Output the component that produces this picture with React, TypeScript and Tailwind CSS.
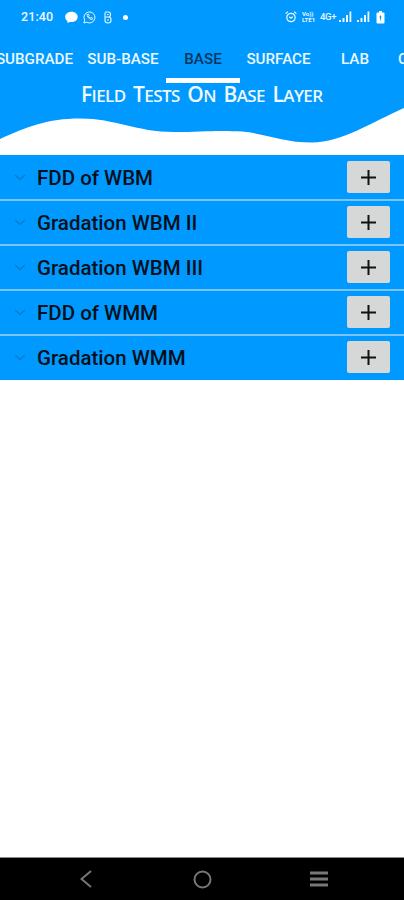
import clsx from 'clsx'

const tabs = [
	{ label: 'SUBGRADE', width: 'w-[95px]' },
	{ label: 'SUB-BASE', width: 'w-[82px]' },
	{ label: 'BASE', width: 'w-[74px] ml-[2px]', active: true },
	{ label: 'SURFACE', width: 'w-[77px]' },
	{ label: 'LAB', width: 'w-[76px]' },
	{ label: 'CBR', width: 'w-[39px]' },
]

const tests = ['FDD of WBM', 'Gradation WBM II', 'Gradation WBM III', 'FDD of WMM', 'Gradation WMM']

function Signal() {
	return (
		<svg width="13" height="12" viewBox="0 0 13 12" fill="currentColor">
			<path d="M0 9h2v2H0zM3.5 7h2v4H3.500zM7 4h2v7H7zM10.500 .5h1.800V11h-1.800z" />
		</svg>
	)
}

function StatusBar() {
	return (
		<div className="flex h-[34px] items-center pr-[19px] pl-[21px] text-[#edf8ff]">
			<span className="w-[44px] text-[12.5px] font-medium tracking-[0.1px]">21:40</span>
			<svg width="13" height="13" viewBox="0 0 13 13" fill="white">
				<path d="M6.5 .7C3 .7 .2 2.900 .2 5.900c0 1.800 1 3.300 2.500 4.200L2.200 12l2.700-1.100c3.900.7 7.800-1.500 7.800-5C12.700 2.900 10 .7 6.500 .7z" />
			</svg>
			<svg className="ml-[5px]" width="13" height="13" viewBox="0 0 13 13" fill="none" stroke="currentColor" strokeWidth="1">
				<path d="M.9 12l.8-2.800A5.500 5.500 0 1 1 3.700 11.200z" />
				<path d="M4.200 3.500c-.5 2 2.500 5.300 5 5l.4-1.300-1.500-.8-.8.7c-.8-.3-1.500-1-1.800-1.700l.6-.8-.6-1.500z" />
			</svg>
			<svg className="ml-[8px]" width="8" height="13" viewBox="0 0 8 13" fill="none" stroke="currentColor" strokeWidth="1.100">
				<path d="M1 1.500v8Q1 12 4 12t3-2.500V8.500Q7 6 4.500 6H1M1 1h3.500Q6.500 1 6.500 3.500T4.500 6" />
				<path d="M3 3.500h1.500M3 9h2" />
			</svg>
			<span className="ml-[11px] h-[5px] w-[5px] rounded-full bg-white" />
			<div className="ml-auto flex items-center">
				<svg width="12" height="12" viewBox="0 0 12 12" fill="none" stroke="currentColor" strokeWidth="1.200">
					<circle cx="6" cy="6.500" r="4.200" />
					<path d="M.6 2.600L2.800 .8M11.400 2.600L9.200 .8M4.200 5.800L6 7.300l1.800-1.500" />
				</svg>
				<div className="ml-[5px] w-[14px] text-[6px] leading-[6px] font-bold whitespace-pre-line">{'Vo))\nLTE1'}</div>
				<span className="ml-[4px] w-[19px] text-[9.5px] font-medium tracking-[-0.3px]">4G+</span>
				<Signal />
				<span className="w-[5px]" />
				<Signal />
				<svg className="ml-[6px]" width="9" height="13" viewBox="0 0 9 13">
					<path d="M3 0h3v1.500h1.500Q8.500 1.500 8.500 2.500v9q0 1-1 1h-6q-1 0-1-1v-9q0-1 1-1H3z" fill="white" />
					<path d="M4.500 4.500v4M3.500 6h2M4.500 8.500v1" stroke="#0099ff" strokeWidth="1" />
				</svg>
			</div>
		</div>
	)
}

function Tabs() {
	return (
		<nav className="-ml-[13px] flex h-[49px] w-[450px]">
			{tabs.map((tab) => (
				<button
					key={tab.label}
					className={clsx(
						'flex shrink-0 items-center justify-center border-b-[5px] pt-[6px] text-[15.2px] font-medium',
						tab.width,
						tab.active ? 'border-white text-[#07365c]' : 'border-transparent text-[#edf8ff]'
					)}>
					{tab.label}
				</button>
			))}
		</nav>
	)
}

function Title() {
	return (
		<h1 className="flex h-[25px] items-baseline gap-[7.5px] pl-[81px] font-['Open_Sans',sans-serif] text-[17px] leading-[22px] font-semibold tracking-[-0.6px] whitespace-nowrap text-[#edf8ff] uppercase">
			{['Field', 'Tests', 'On', 'Base', 'Layer'].map((word) => (
				<span key={word} className="block first-letter:text-[21px]">
					{word}
				</span>
			))}
		</h1>
	)
}

function TestRow({ name }: { name: string }) {
	return (
		<li className="flex h-[45px] items-center border-b-2 border-[#79c4f8] pr-[14px] pb-px pl-[14px] last:h-[44px] last:border-[#0099ff] last:pb-0">
			<svg width="12" height="7" viewBox="0 0 12 7" fill="none" stroke="#087bd0" strokeWidth="1.300">
				<path d="M1 1l5 4.500L11 1" />
			</svg>
			<span className="ml-[11px] pt-[2px] text-[20.5px] leading-6 font-medium text-[#03101b]">{name}</span>
			<button className="ml-auto flex h-[32px] w-[43px] items-center justify-center rounded-[2px] bg-[#d6d8d8]">
				<svg width="15" height="15" viewBox="0 0 15 15" stroke="#111" strokeWidth="2">
					<path d="M7.500 0v15M0 7.500h15" />
				</svg>
			</button>
		</li>
	)
}

export default function App() {
	return (
		<div className="flex h-[900px] w-[404px] flex-col overflow-hidden bg-white font-['Roboto',sans-serif]">
			<header className="h-[156px] shrink-0 bg-[#0099ff]">
				<StatusBar />
				<Tabs />
				<Title />
				<svg className="block" width="404" height="48" viewBox="0 0 404 48" fill="white">
					<path d="M0 31C26 19 48 10.500 80 10.500C116 10.500 136 24 174 24C202 24 216 22 242 23.500C268 26 284 34.500 312 34.500C342 34.500 372 14 404 0V47H0z" />
				</svg>
			</header>
			<ul className="shrink-0 bg-[#0099ff]">
				{tests.map((name) => (
					<TestRow key={name} name={name} />
				))}
			</ul>
			<footer className="mt-auto flex h-[43px] shrink-0 items-center border-t border-[#888] bg-black pl-[80px] text-[#777]">
				<svg width="12" height="18" viewBox="0 0 12 18" fill="none" stroke="currentColor" strokeWidth="2">
					<path d="M11 1L1.500 9l9.500 8" />
				</svg>
				<svg className="ml-[101px]" width="19" height="19" viewBox="0 0 19 19" fill="none" stroke="currentColor" strokeWidth="2">
					<circle cx="9.500" cy="9.500" r="8" />
				</svg>
				<svg className="ml-[98px]" width="18" height="16" viewBox="0 0 18 16" stroke="currentColor" strokeWidth="2.800">
					<path d="M0 2h18M0 8h18M0 14h18" />
				</svg>
			</footer>
		</div>
	)
}
